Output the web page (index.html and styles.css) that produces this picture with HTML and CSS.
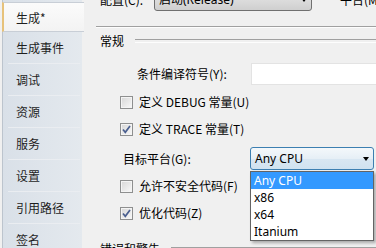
FILE: index.html
```html
<!DOCTYPE html>
<html lang="zh-cn">
<head>
    <meta charset="UTF-8">
    <title>项目属性 - 生成</title>
    <link rel="stylesheet" href="styles.css">
</head>
<body>
    <div class="window">
        <ul class="tabs">
            <li class="tab active">生成*</li>
            <li class="tab">生成事件</li>
            <li class="tab">调试</li>
            <li class="tab">资源</li>
            <li class="tab">服务</li>
            <li class="tab">设置</li>
            <li class="tab">引用路径</li>
            <li class="tab">签名</li>
        </ul>

        <div class="main">
            <div class="toolbar">
                <span class="toolbar-label">配置(C):</span>
                <div class="combo combo-plain">启动(Release)<span class="arrow"></span></div>
                <span class="toolbar-label platform-label">平台(M):</span>
            </div>
            <div class="rule"></div>

            <div class="group">常规</div>

            <div class="field symbols">
                <span class="field-label">条件编译符号(Y):</span>
                <div class="textbox"></div>
            </div>

            <div class="check row-debug">
                <span class="box"></span>
                <span>定义 DEBUG 常量(U)</span>
            </div>
            <div class="check row-trace">
                <span class="box">
                    <svg width="11" height="11" viewBox="0 0 11 11"><polyline points="2,5.5 4.3,8.3 9,2" /></svg>
                </span>
                <span>定义 TRACE 常量(T)</span>
            </div>

            <div class="field platform">
                <span class="field-label">目标平台(G):</span>
                <div class="combo-wrap">
                    <div class="combo combo-active">Any CPU<span class="arrow"></span></div>
                    <ul class="dropdown">
                        <li class="selected">Any CPU</li>
                        <li>x86</li>
                        <li>x64</li>
                        <li>Itanium</li>
                    </ul>
                </div>
            </div>

            <div class="check row-unsafe">
                <span class="box"></span>
                <span>允许不安全代码(F)</span>
            </div>
            <div class="check row-optimize">
                <span class="box">
                    <svg width="11" height="11" viewBox="0 0 11 11"><polyline points="2,5.5 4.3,8.3 9,2" /></svg>
                </span>
                <span>优化代码(Z)</span>
            </div>

            <div class="group group-errors">错误和警告</div>
        </div>
    </div>
</body>
</html>
```

FILE: styles.css
```css
* {
    margin: 0;
    padding: 0;
    box-sizing: border-box;
}

body {
    font-family: "Noto Sans CJK SC", sans-serif;
    font-size: 12px;
    line-height: 16px;
    color: #000;
    background-color: #f0f0f0;
    width: 376px;
    height: 248px;
    overflow: hidden;
}

.window {
    display: flex;
    height: 248px;
}

/* colonne des onglets a gauche */
.tabs {
    list-style: none;
    flex: none;
    width: 80px;
    margin-left: 2px;
    padding-top: 2px;
    border-left: 1px solid #bcc4cd;
    background: linear-gradient(to right, #d9e0e8, #e4e9ee);
}

.tab {
    position: relative;
    height: 32px;
    line-height: 31px;
    padding-left: 13px;
    color: #1e1e1e;
}

.tab::after {
    content: "";
    position: absolute;
    left: 5px;
    right: 2px;
    bottom: 0;
    height: 1px;
    background-color: #eaedf1;
}

.tab.active {
    height: 30px;
    line-height: 29px;
    margin-left: -1px;
    margin-right: -2px;
    padding-left: 12px;
    background: linear-gradient(#fbfbfb, #f3f3f3);
    border-left: 2px solid #e7c27a;
    border-top: 1px solid #c8ced6;
    border-bottom: 1px solid #c8ced6;
}

.tab.active::after {
    display: none;
}

.main {
    flex: 1;
    min-width: 0;
    padding-left: 18px;
    display: flex;
    flex-direction: column;
}

/* barre configuration / plateforme */
.toolbar {
    display: flex;
    align-items: center;
    height: 23px;
    margin-top: -12px;
}

.toolbar-label {
    width: 54px;
    flex: none;
}

.platform-label {
    margin-left: 28px;
}

.combo {
    position: relative;
    height: 23px;
    line-height: 21px;
    padding-left: 4px;
    border-radius: 3px;
    font-family: "Noto Sans", "Noto Sans CJK SC", sans-serif;
}

.combo-plain {
    width: 158px;
    flex: none;
    border: 1px solid #707070;
    background: linear-gradient(#f2f2f2, #ebebeb 50%, #dddddd 50%, #cfcfcf);
}

.combo-active {
    width: 124px;
    border: 1px solid #3c7fb1;
    background: linear-gradient(#f4f8fb, #e6eff6 50%, #d9e7f2 50%, #d0e2f0);
}

.arrow {
    position: absolute;
    right: 4px;
    top: 9px;
    border-left: 3.5px solid transparent;
    border-right: 3.5px solid transparent;
    border-top: 4px solid #000;
}

.rule {
    height: 2px;
    margin-top: 15px;
    margin-left: -4px;
    border-top: 1px solid #a0a0a0;
    border-bottom: 1px solid #fdfdfd;
}

.group {
    display: flex;
    align-items: center;
    gap: 11px;
    height: 16px;
    margin-top: 5px;
}

.group::after {
    content: "";
    flex: 1;
    height: 2px;
    border-top: 1px solid #a0a0a0;
    border-bottom: 1px solid #fdfdfd;
}

.group-errors {
    margin-top: 20px;
}

.field {
    display: flex;
    align-items: center;
}

.symbols {
    height: 22px;
    margin-top: 14px;
    padding-left: 37px;
}

.symbols .field-label {
    width: 114px;
    flex: none;
}

.textbox {
    width: 140px;
    flex: none;
    height: 22px;
    background-color: #fff;
    border: 1px solid #e3e3e3;
}

.platform {
    height: 23px;
    margin-top: 10px;
    padding-left: 23px;
}

.platform .field-label {
    width: 127px;
    flex: none;
}

.combo-wrap {
    position: relative;
    width: 124px;
    flex: none;
}

.dropdown {
    list-style: none;
    position: absolute;
    top: 24px;
    left: 0;
    width: 124px;
    background-color: #fff;
    border: 1px solid #646464;
    box-shadow: 2px 2px 3px rgba(0, 0, 0, 0.3);
    font-family: "Noto Sans", sans-serif;
    z-index: 2;
}

.dropdown li {
    height: 17px;
    line-height: 17px;
    padding-left: 3px;
}

.dropdown li.selected {
    background-color: #3399ff;
    color: #fff;
}

/* cases a cocher */
.check {
    display: flex;
    align-items: center;
    gap: 6px;
    height: 16px;
    padding-left: 20px;
}

.row-debug { margin-top: 9px; }
.row-trace { margin-top: 11px; }
.row-unsafe { margin-top: 8px; }
.row-optimize { margin-top: 11px; }

.box {
    width: 13px;
    height: 13px;
    flex: none;
    border: 1px solid #8e8f8f;
    background: linear-gradient(135deg, #d6d6d6, #f9f9f9);
    box-shadow: inset 0 0 0 1px #f4f4f4;
    display: flex;
    align-items: center;
    justify-content: center;
}

.box svg polyline {
    fill: none;
    stroke: #4a5f8f;
    stroke-width: 1.7;
}
```
